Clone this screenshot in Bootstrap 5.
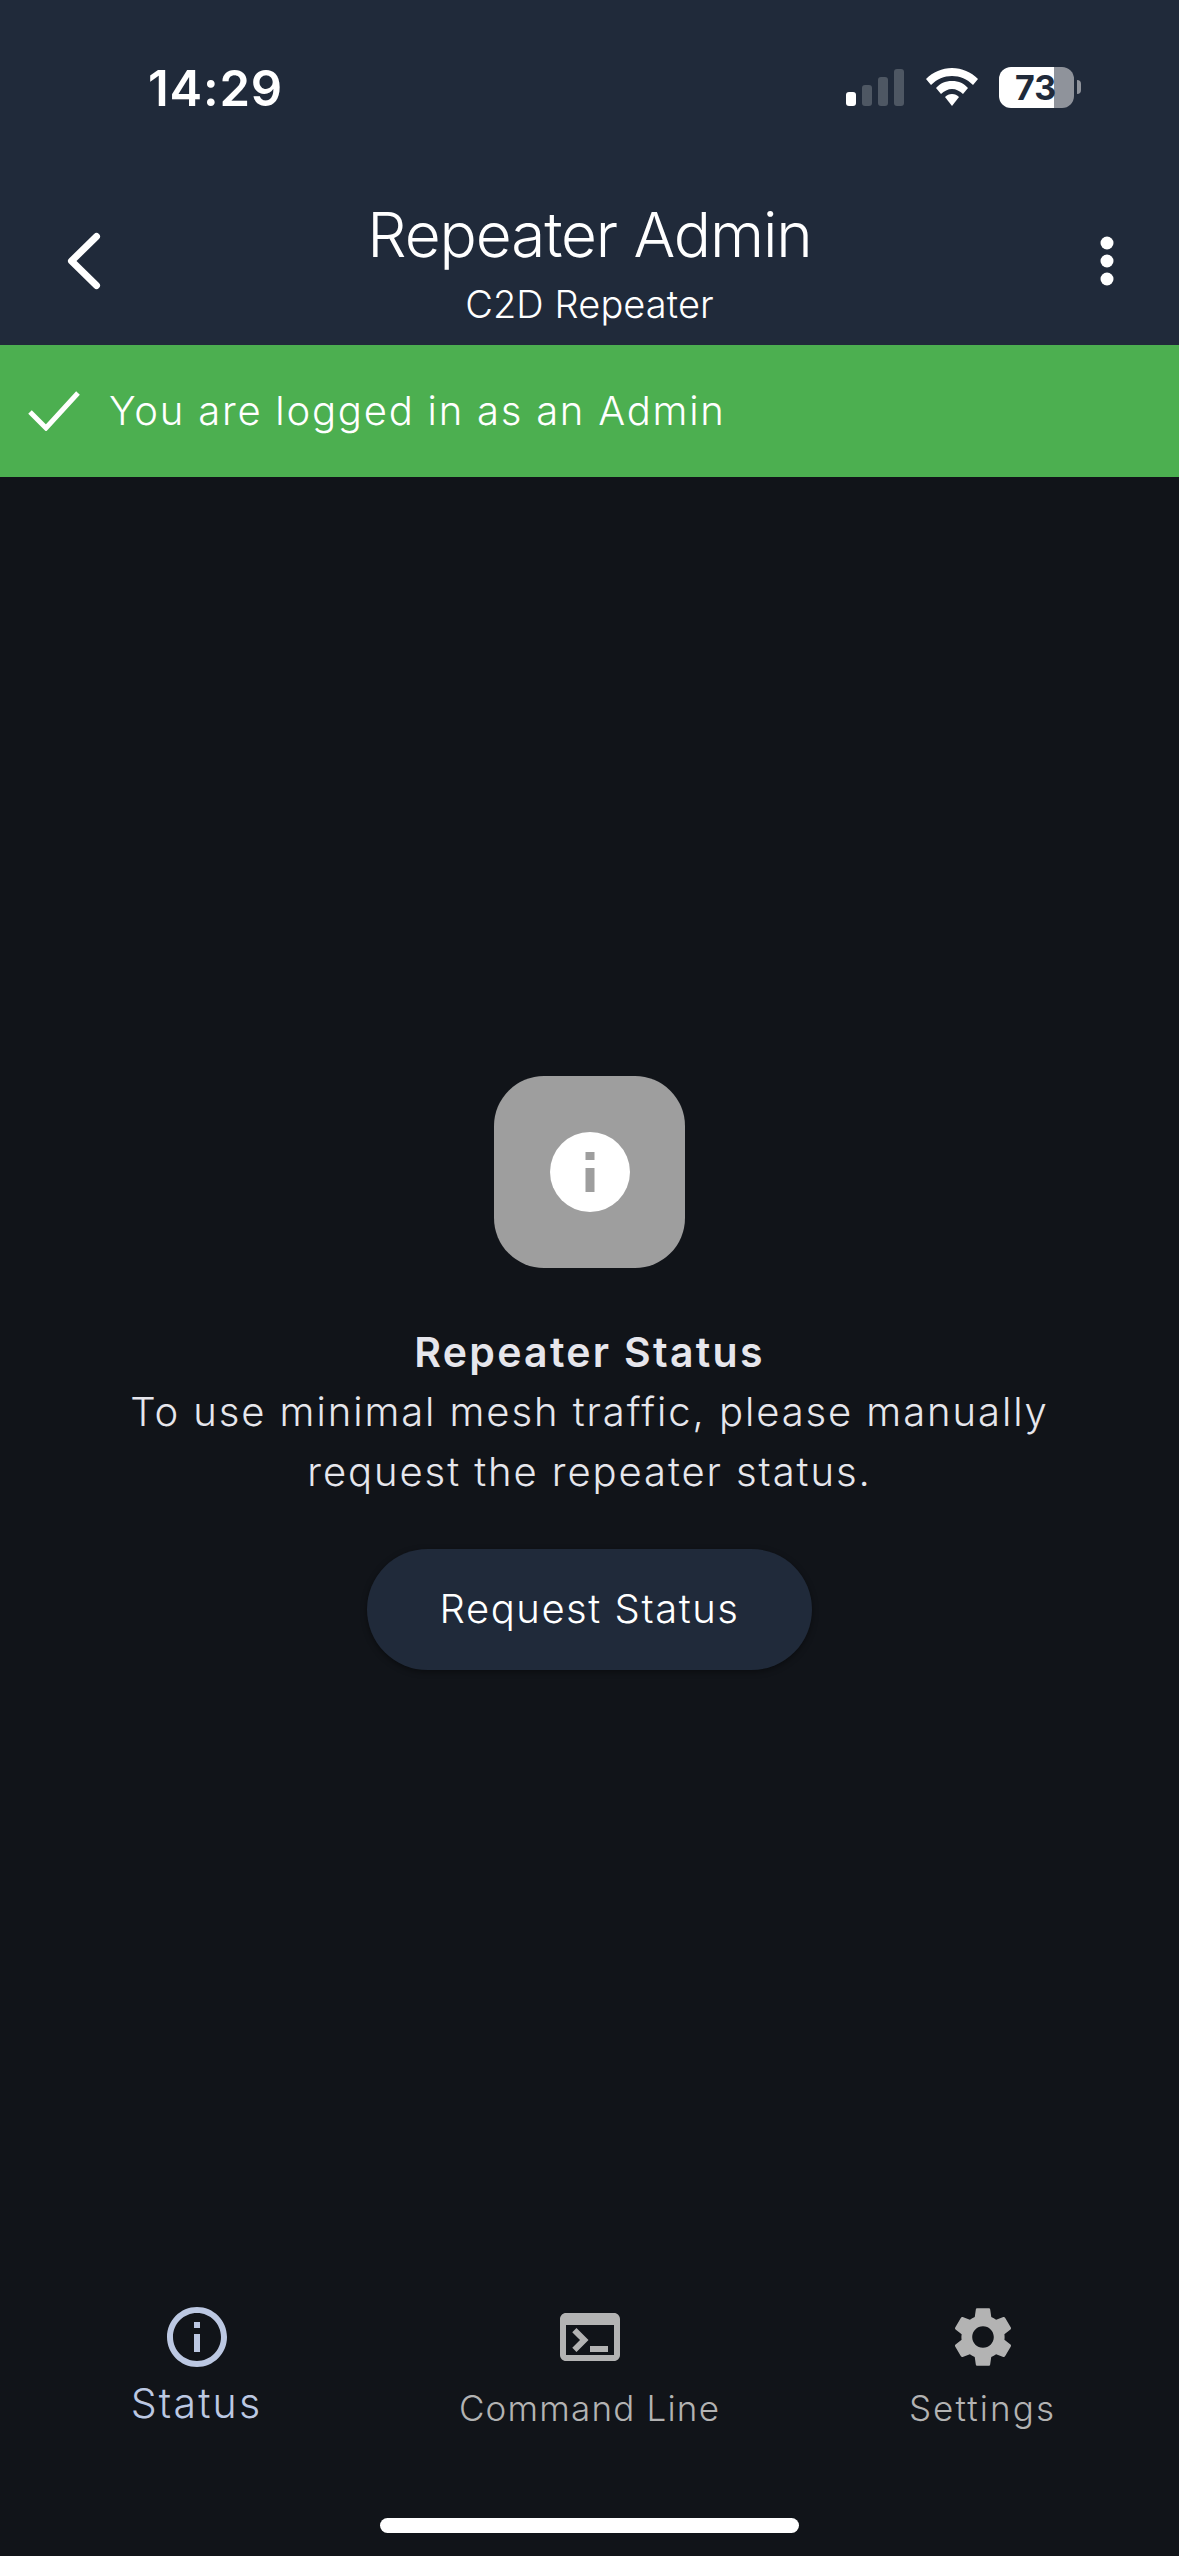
<!DOCTYPE html>
<html lang="en">
<head>
  <meta charset="UTF-8">
  <title>Repeater Admin</title>
  <link href="https://cdn.jsdelivr.net/npm/bootstrap@5.3.3/dist/css/bootstrap.min.css" rel="stylesheet">
  <style>
    html, body { height: 2556px; overflow: hidden; }
    body { background: #111419; font-family: Inter, "Liberation Sans", sans-serif; color: #fff; }
    .screen { height: 2556px; }
    .top-area { background: #202a3a; height: 345px; }
    .status-row { height: 174px; padding: 68px 98px 0 148px; }
    .clock { font-size: 49px; font-weight: 600; line-height: 42px; letter-spacing: .8px; }
    .status-icons { gap: 21px; height: 42px; margin-top: -2px; }
    .signal { gap: 6px; height: 37px; margin-right: 1px; }
    .signal i { display: block; width: 10px; background: #4e5763; border-radius: 3px; }
    .signal i.on { background: #fff; }
    .batt { width: 75px; height: 41px; border-radius: 12px; background: linear-gradient(90deg, #fff 55px, #8f939b 55px); color: #202a3a; font-size: 34px; font-weight: 700; line-height: 41px; text-align: center; padding-right: 2px; }
    .batt-tip { width: 4px; height: 14px; background: #8f939b; border-radius: 0 4px 4px 0; margin-left: 3px; }
    .app-bar { height: 171px; padding: 0 60px; }
    .app-side { width: 48px; margin-top: 52px; }
    .app-title { font-size: 62px; font-weight: 300; line-height: 70px; letter-spacing: -1.1px; margin-top: 26px; }
    .app-sub { font-size: 38px; font-weight: 300; line-height: 46px; letter-spacing: .1px; margin-top: 11px; }
    .login-banner { background: #4caf50; height: 132px; padding-left: 28px; gap: 29px; font-size: 40px; font-weight: 300; letter-spacing: 1.77px; }
    .tile { width: 191px; height: 192px; border-radius: 50px; background: #9e9e9e; margin-bottom: 54px; }
    .tile-title { font-size: 41px; font-weight: 600; color: #e6e6ec; letter-spacing: 2.3px; line-height: 60px; }
    .tile-text { font-size: 40px; font-weight: 300; color: #e6e6ec; letter-spacing: 1.92px; line-height: 60px; margin-bottom: 47px; }
    .req-btn { background: #202a3a; color: #fff; border: 0; border-radius: 61px; width: 445px; height: 121px; font-size: 40px; font-weight: 300; letter-spacing: 1.55px; box-shadow: 0 2px 6px rgba(0,0,0,.4); }
    main { padding-bottom: 33px; }
    .tabs { height: 217px; }
    .tab-item { color: #b3b3b3; font-size: 35px; font-weight: 300; letter-spacing: 1.2px; line-height: 44px; }
    .tab-item svg { display: block; margin: 0 auto 13px; }
    .tab-item.active { color: #bcc8e2; font-size: 41px; letter-spacing: 2.2px; }
    .tab-item.active svg { margin-bottom: 8px; }
    .tab-wide { letter-spacing: 2.1px; }
    .home-bar { width: 419px; height: 15px; border-radius: 8px; background: #fff; margin: 0 auto 23px; }
  </style>
</head>
<body>
<div class="screen d-flex flex-column">
  <header class="top-area">
    <div class="status-row d-flex justify-content-between align-items-start">
      <div class="clock">14:29</div>
      <div class="status-icons d-flex align-items-center">
        <div class="signal d-flex align-items-end">
          <i class="on" style="height:14px"></i><i style="height:21px"></i><i style="height:29px"></i><i style="height:37px"></i>
        </div>
        <svg width="52" height="38" viewBox="0 0 52 38" fill="#fff"><path d="M26 0C16 0 7 4 0 11l5 6c6-6 13-9 21-9s15 3 21 9l5-6C45 4 36 0 26 0z"/><path d="M26 13c-7 0-12 2.500-16 7l5 6c3-3 7-5 11-5s8 2 11 5l5-6c-4-4.500-9-7-16-7z"/><path d="M26 26c-3 0-5 1-7 3l7 9 7-9c-2-2-4-3-7-3z"/></svg>
        <div class="d-flex align-items-center">
          <div class="batt">73</div>
          <div class="batt-tip"></div>
        </div>
      </div>
    </div>
    <div class="app-bar d-flex justify-content-between align-items-start">
      <div class="app-side">
        <svg class="d-block" width="48" height="70" viewBox="0 0 48 70" fill="none" stroke="#fff" stroke-width="7" stroke-linecap="round" stroke-linejoin="round"><path d="M36.500 10.500 11.500 35 36.500 59.500"/></svg>
      </div>
      <div class="text-center">
        <div class="app-title">Repeater Admin</div>
        <div class="app-sub">C2D Repeater</div>
      </div>
      <div class="app-side">
        <svg class="d-block" width="48" height="70" viewBox="0 0 48 70" fill="#fff"><circle cx="36" cy="17" r="6.500"/><circle cx="36" cy="35" r="6.500"/><circle cx="36" cy="53" r="6.500"/></svg>
      </div>
    </div>
  </header>

  <div class="login-banner d-flex align-items-center">
    <svg width="52" height="40" viewBox="0 0 52 40" fill="none" stroke="#fff" stroke-width="5"><path d="M2 21 18 37 50 2"/></svg>
    <span>You are logged in as an Admin</span>
  </div>

  <main class="flex-grow-1 d-flex flex-column align-items-center justify-content-center text-center">
    <div class="tile d-flex align-items-center justify-content-center">
      <svg width="80" height="80" viewBox="0 0 80 80"><circle cx="40" cy="40" r="40" fill="#fff"/><rect x="35.500" y="20" width="9" height="8" fill="#9e9e9e"/><rect x="35.500" y="36" width="9" height="24" fill="#9e9e9e"/></svg>
    </div>
    <div class="tile-title">Repeater Status</div>
    <div class="tile-text">To use minimal mesh traffic, please manually<br>request the repeater status.</div>
    <button class="btn req-btn">Request Status</button>
  </main>

  <nav class="tabs row g-0 flex-shrink-0">
    <div class="col-4 text-center tab-item active">
      <svg width="72" height="72" viewBox="0 0 24 24" fill="currentColor"><path d="M11 7h2v2h-2zm0 4h2v6h-2zm1-9C6.480 2 2 6.480 2 12s4.480 10 10 10 10-4.480 10-10S17.520 2 12 2zm0 18c-4.410 0-8-3.590-8-8s3.590-8 8-8 8 3.590 8 8-3.590 8-8 8z"/></svg>
      Status
    </div>
    <div class="col-4 text-center tab-item">
      <svg width="72" height="72" viewBox="0 0 24 24" fill="currentColor"><path d="M20 4H4c-1.100 0-2 .9-2 2v12c0 1.100.9 2 2 2h16c1.100 0 2-.9 2-2V6c0-1.100-.9-2-2-2zm0 14H4V8h16v10zm-2-1h-6v-2h6v2zM7.500 17l-1.410-1.410L8.670 13l-2.590-2.590L7.500 9l4 4-4 4z"/></svg>
      Command Line
    </div>
    <div class="col-4 text-center tab-item tab-wide">
      <svg width="72" height="72" viewBox="0 0 24 24" fill="currentColor"><path d="M19.140 12.940c.04-.3.06-.61.06-.94 0-.32-.02-.64-.07-.94l2.030-1.580c.18-.14.23-.41.12-.61l-1.920-3.320c-.12-.22-.37-.29-.59-.22l-2.390.96c-.5-.38-1.030-.7-1.620-.94l-.36-2.540c-.04-.24-.24-.41-.48-.41h-3.840c-.24 0-.43.17-.47.41l-.36 2.540c-.59.24-1.130.57-1.620.94l-2.390-.96c-.22-.08-.47 0-.59.22L2.740 8.870c-.12.21-.08.47.12.61l2.030 1.580c-.05.3-.09.63-.09.94s.02.64.07.94l-2.030 1.580c-.18.14-.23.41-.12.61l1.920 3.320c.12.22.37.29.59.22l2.390-.96c.5.38 1.030.7 1.620.94l.36 2.540c.05.24.24.41.48.41h3.840c.24 0 .44-.17.47-.41l.36-2.540c.59-.24 1.130-.56 1.620-.94l2.390.96c.22.08.47 0 .59-.22l1.920-3.320c.12-.22.07-.47-.12-.61l-2.010-1.580zM12 15.600c-1.980 0-3.600-1.620-3.600-3.600s1.620-3.600 3.600-3.600 3.600 1.620 3.600 3.600-1.620 3.600-3.600 3.600z"/></svg>
      Settings
    </div>
  </nav>
  <div class="home-bar flex-shrink-0"></div>
</div>
<script src="https://cdn.jsdelivr.net/npm/bootstrap@5.3.3/dist/js/bootstrap.bundle.min.js"></script>
</body>
</html>
